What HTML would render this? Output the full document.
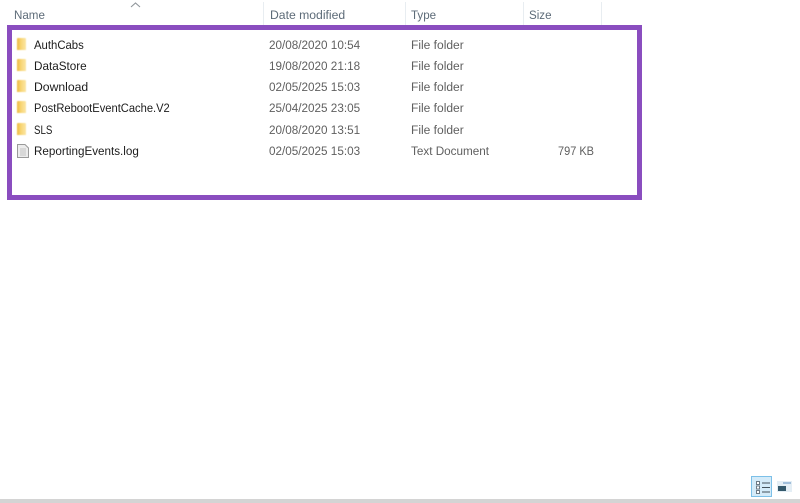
<!DOCTYPE html>
<html><head><meta charset="utf-8">
<style>
html,body{margin:0;padding:0;background:#fff}
body{width:800px;height:503px;position:relative;overflow:hidden;font-family:"Liberation Sans",sans-serif;font-size:12.2px}
.t{position:absolute;white-space:nowrap;line-height:16px;filter:blur(.3px);transform-origin:0 50%}
.n{left:34px;color:#1c1c1c;margin-top:-.6px}
.d{left:269px;color:#5f5f5f;transform:scaleX(.96);margin-top:-.6px}
.y{left:411px;color:#5f5f5f;transform:scaleX(.985);margin-top:-.6px}
.h{top:7px;color:#5d6b78;transform:scaleX(.95)}
.sep{position:absolute;top:2px;width:1px;height:23px;background:#e8edf1}
.f{position:absolute;left:17px;width:9px;height:12px;background:linear-gradient(90deg,#eeb93f 0,#f8d675 45%,#fbe6a6 100%);border-radius:1px 1px 0 0;filter:blur(.4px)}
</style></head><body>
<svg style="position:absolute;left:130px;top:2px" width="11" height="6"><path d="M1 5L5.500 1L10 5" fill="none" stroke="#8f959a" stroke-width="1.100"/></svg>
<div class="t h" style="left:14px">Name</div>
<div class="t h" style="left:270px;transform:none">Date modified</div>
<div class="t h" style="left:411px">Type</div>
<div class="t h" style="left:529px">Size</div>
<div class="sep" style="left:263px"></div>
<div class="sep" style="left:405px"></div>
<div class="sep" style="left:523px"></div>
<div class="sep" style="left:601px"></div>

<div style="position:absolute;left:7px;top:25px;width:625px;height:165px;border:5px solid #8a4dbf"></div>

<div class="f" style="top:38px"></div>
<div class="f" style="top:59px"></div>
<div class="f" style="top:80px"></div>
<div class="f" style="top:101px"></div>
<div class="f" style="top:123px"></div>
<svg style="position:absolute;left:17px;top:144px;filter:blur(.3px)" width="12" height="14"><path d="M.5.5H8L11.500 4V13.500H.5Z" fill="#ececec" stroke="#9a9a9a"/><path d="M3 5H9M3 7H9M3 9H9M3 11H9" stroke="#c4c4c4"/></svg>

<div class="t n" style="top:38px;transform:scaleX(.93)">AuthCabs</div>
<div class="t d" style="top:38px">20/08/2020 10:54</div>
<div class="t y" style="top:38px">File folder</div>
<div class="t n" style="top:59px;transform:scaleX(.96)">DataStore</div>
<div class="t d" style="top:59px">19/08/2020 21:18</div>
<div class="t y" style="top:59px">File folder</div>
<div class="t n" style="top:80px;transform:scaleX(1)">Download</div>
<div class="t d" style="top:80px">02/05/2025 15:03</div>
<div class="t y" style="top:80px">File folder</div>
<div class="t n" style="top:101px;transform:scaleX(.915)">PostRebootEventCache.V2</div>
<div class="t d" style="top:101px">25/04/2025 23:05</div>
<div class="t y" style="top:101px">File folder</div>
<div class="t n" style="top:123px;transform:scaleX(.8)">SLS</div>
<div class="t d" style="top:123px">20/08/2020 13:51</div>
<div class="t y" style="top:123px">File folder</div>
<div class="t n" style="top:144px;transform:scaleX(.955)">ReportingEvents.log</div>
<div class="t d" style="top:144px">02/05/2025 15:03</div>
<div class="t y" style="top:144px;transform:scaleX(.96)">Text Document</div>
<div class="t" style="top:143.400px;left:558px;color:#5f5f5f;transform:scaleX(.9)">797 KB</div>

<div style="position:absolute;left:751px;top:476px;width:21px;height:21px;box-sizing:border-box;background:#d4ebf9;border:1px solid #7cc0e8"></div>
<svg style="position:absolute;left:755px;top:480px;filter:blur(.3px)" width="16" height="15"><path d="M1.500 1.500h3v3h-3zM1.500 6h3v3h-3zM1.500 10.500h3v3h-3z" fill="#fff" stroke="#6d7a85"/><path d="M7 3h8M7 7.500h8M7 12h8" stroke="#44525c"/></svg>
<svg style="position:absolute;left:777px;top:481px;filter:blur(.3px)" width="15" height="12"><rect width="15" height="11" fill="#e4eef5"/><rect x="1" y="5" width="8" height="5" fill="#33586b"/><path d="M6 2H14" stroke="#5b8fc0"/></svg>
<div style="position:absolute;left:0;top:499px;width:800px;height:4px;background:#d4d4d4"></div>
</body></html>
